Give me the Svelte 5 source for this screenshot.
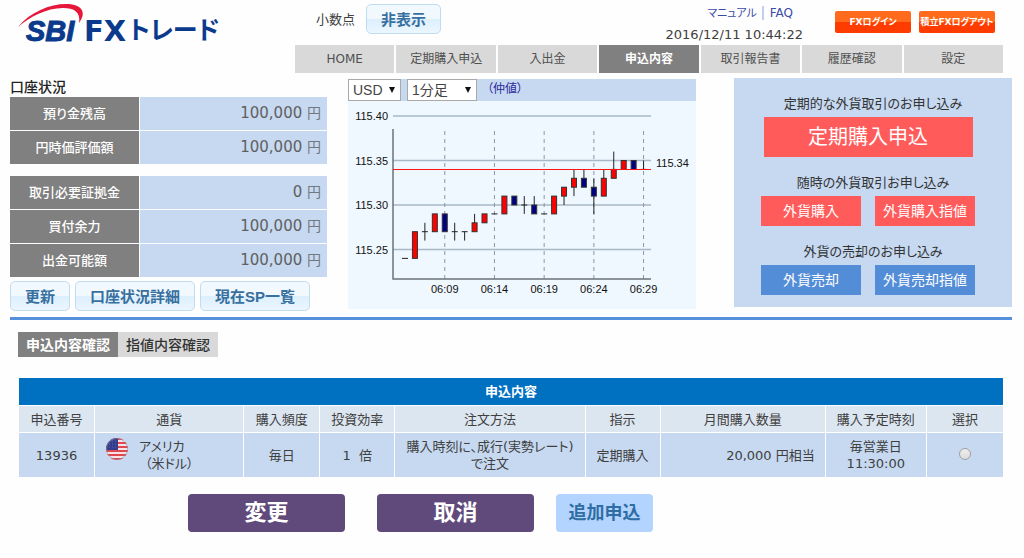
<script>
  let pair = $state('USD');
  let span = $state('1');
  let picked = $state('');

  const menu = ['HOME', '定期購入申込', '入出金', '申込内容', '取引報告書', '履歴確認', '設定'];
  const current = '申込内容';

  const balances = [
    [
      { label: '預り金残高', value: '100,000' },
      { label: '円時価評価額', value: '100,000' }
    ],
    [
      { label: '取引必要証拠金', value: '0' },
      { label: '買付余力', value: '100,000' },
      { label: '出金可能額', value: '100,000' }
    ]
  ];

  const orderGroups = [
    { caption: '定期的な外貨取引のお申し込み', kind: 'buy large', buttons: ['定期購入申込'] },
    { caption: '随時の外貨取引お申し込み', kind: 'buy', buttons: ['外貨購入', '外貨購入指値'] },
    { caption: '外貨の売却のお申し込み', kind: 'sell', buttons: ['外貨売却', '外貨売却指値'] }
  ];

  const columns = [
    { label: '申込番号', width: 76 },
    { label: '通貨', width: 149 },
    { label: '購入頻度', width: 76 },
    { label: '投資効率', width: 75 },
    { label: '注文方法', width: 190 },
    { label: '指示', width: 75 },
    { label: '月間購入数量', width: 165 },
    { label: '購入予定時刻', width: 101 },
    { label: '選択', width: 77 }
  ];

  // open, close, low, high (pips above 115.00)
  const candles = [
    [24, 24, 24, 24], [24, 27, 24, 27], [27, 27, 26, 28], [27, 29, 27, 29], [29, 27, 27, 29],
    [27, 27, 26, 28], [27, 27, 26, 27], [27, 28, 27, 29], [28, 29, 28, 29], [29, 29, 29, 29],
    [29, 31, 29, 31], [31, 30, 30, 31], [30, 30, 29, 31], [30, 29, 29, 31], [29, 29, 29, 29],
    [29, 31, 29, 31], [31, 32, 30, 32], [32, 33, 31, 34], [33, 32, 32, 34], [32, 31, 29, 33],
    [31, 33, 31, 34], [33, 34, 33, 36], [34, 35, 34, 35], [35, 34, 34, 35], [34, 34, 34, 35]
  ];
  const prices = [40, 35, 30, 25];
  const times = ['06:09', '06:14', '06:19', '06:24', '06:29'];

  const py = (p) => 104 - (p - 30) * 8.9;
  const px = (i) => 57 + i * 9.94;
</script>

<div class="page">
  <header>
    <svg class="logo" viewBox="0 0 285 54" role="img" aria-label="SBI FXトレード">
      <path d="M8 27C20 12 40 4 56 4C70 4 78 11 69 23C71 12 64 8 53 8C36 8 20 17 8 27Z" fill="#e6173a" />
      <text class="sbi" x="16" y="41">SBI</text>
      <text class="fx" x="74" y="41">FX</text>
      <text class="kana" x="119" y="39">トレード</text>
    </svg>
    <div class="decimals">
      <span>小数点</span>
      <button class="soft">非表示</button>
    </div>
    <div class="meta">
      <div class="links"><a href="#manual">マニュアル</a><a href="#faq">FAQ</a></div>
      <time>2016/12/11 10:44:22</time>
    </div>
    <div class="session">
      <button>FXログイン</button>
      <button>積立FXログアウト</button>
    </div>
  </header>

  <nav>
    {#each menu as item}
      <a href="#menu" class:active={item === current}>{item}</a>
    {/each}
  </nav>

  <div class="top">
    <section>
      <h2>口座状況</h2>
      {#each balances as group}
        <table class="balance">
          <tbody>
            {#each group as row}
              <tr>
                <th scope="row">{row.label}</th>
                <td>{row.value} <small>円</small></td>
              </tr>
            {/each}
          </tbody>
        </table>
      {/each}
      <div class="account-buttons">
        <button class="soft">更新</button>
        <button class="soft">口座状況詳細</button>
        <button class="soft">現在SP一覧</button>
      </div>
    </section>

    <section class="chart">
      <div class="chart-bar">
        <span class="select pair">
          <select bind:value={pair} aria-label="通貨">
            <option>USD</option>
          </select>
        </span>
        <span class="select span">
          <select bind:value={span} aria-label="足種">
            <option value="1">1分足</option>
          </select>
        </span>
        <span class="mid">（仲値）</span>
      </div>
      <svg viewBox="0 0 348 208">
        {#each prices as p}
          <line x1="45" x2="303" y1={py(p)} y2={py(p)} stroke="#a9b8c6" stroke-width="1.5" />
          <text x="40" y={py(p) + 4} text-anchor="end">115.{p}</text>
        {/each}
        {#each times as t, i}
          <line x1={px(4 + i * 5)} x2={px(4 + i * 5)} y1="30" y2="178" stroke="#8a97a8" stroke-dasharray="4 4" />
          <text x={px(4 + i * 5)} y="192" text-anchor="middle">{t}</text>
        {/each}
        <path d="M45 28V178H303" fill="none" stroke="#6c737c" stroke-width="1.5" />
        {#each candles as [open, close, low, high], i}
          <line x1={px(i)} x2={px(i)} y1={py(high)} y2={py(low)} stroke="#222" />
          {#if open === close}
            <line x1={px(i) - 3} x2={px(i) + 3} y1={py(open)} y2={py(open)} stroke="#222" />
          {:else}
            <rect
              x={px(i) - 2.5}
              y={py(Math.max(open, close))}
              width="5"
              height={Math.abs(open - close) * 8.9}
              fill={close > open ? '#f00' : '#000080'}
              stroke="#333" />
          {/if}
        {/each}
        <rect x="45" y="68" width="258" height="1" fill="#ff1414" />
        <text x="308" y="66">115.34</text>
      </svg>
    </section>

    <section class="orders">
      {#each orderGroups as group}
        <div class="order-group">
          <p>{group.caption}</p>
          <div class="order-buttons {group.kind}">
            {#each group.buttons as label}
              <button>{label}</button>
            {/each}
          </div>
        </div>
      {/each}
    </section>
  </div>

  <main>
    <div class="tabs">
      <button class="active">申込内容確認</button>
      <button>指値内容確認</button>
    </div>

    <table class="list">
      <colgroup>
        {#each columns as col}
          <col style="width: {col.width / 9.84}%" />
        {/each}
      </colgroup>
      <thead>
        <tr class="caption"><th colspan="9">申込内容</th></tr>
        <tr>
          {#each columns as col}
            <th scope="col">{col.label}</th>
          {/each}
        </tr>
      </thead>
      <tbody>
        <tr>
          <td>13936</td>
          <td>
            <div class="currency">
              <svg class="flag" viewBox="0 0 22 22">
                <clipPath id="round"><circle cx="11" cy="11" r="11" /></clipPath>
                <g clip-path="url(#round)">
                  <rect width="22" height="22" fill="#f4e4e8" />
                  {#each [0, 1, 2, 3, 4, 5] as n}
                    <rect y={n * 4} width="22" height="2" fill="#e0474f" />
                  {/each}
                  <rect width="12" height="12" fill="#343d8c" />
                  {#each [3, 6, 9] as y}
                    <path d="M3 {y}H11" stroke="#6068aa" stroke-dasharray="1 2" />
                  {/each}
                </g>
                <circle cx="11" cy="11" r="10.5" fill="none" stroke="#8f8fa8" stroke-opacity="0.6" />
              </svg>
              <div>アメリカ<br /><span>（米ドル）</span></div>
            </div>
          </td>
          <td>毎日</td>
          <td>1&nbsp; 倍</td>
          <td>購入時刻に、成行(実勢レート)<br />で注文</td>
          <td>定期購入</td>
          <td class="amount">20,000 円相当</td>
          <td>毎営業日<br />11:30:00</td>
          <td><input type="radio" name="order" value="13936" bind:group={picked} aria-label="13936を選択" /></td>
        </tr>
      </tbody>
    </table>

    <div class="actions">
      <button>変更</button>
      <button>取消</button>
      <button class="add">追加申込</button>
    </div>
  </main>
</div>

<style>
  :global(body) {
    margin: 0;
    background: #fefefe;
  }
  .page {
    padding: 0 12px 0 10px;
    font: 13px/17px 'DejaVu Sans', 'Noto Sans CJK JP', sans-serif;
    font-feature-settings: 'palt';
    color: #404040;
  }
  button {
    font-family: inherit;
    font-feature-settings: inherit;
    line-height: 1;
    padding: 0;
    border: 0;
    white-space: nowrap;
    cursor: pointer;
  }
  a {
    text-decoration: none;
  }
  table {
    width: 100%;
    border-spacing: 0;
  }

  header {
    display: flex;
    align-items: flex-start;
    height: 45px;
    padding-right: 17px;
  }
  .logo {
    width: 285px;
    height: 54px;
  }
  .logo text {
    fill: #0b3a8d;
    font-weight: bold;
  }
  .logo .sbi {
    font: italic bold 29px 'Liberation Sans', sans-serif;
    stroke: #0b3a8d;
    stroke-width: 1;
  }
  .logo .fx {
    font: bold 29px 'DejaVu Sans', sans-serif;
  }
  .logo .kana {
    font: bold 25px 'Noto Sans CJK JP', sans-serif;
    font-feature-settings: 'palt';
  }
  .decimals {
    display: flex;
    align-items: center;
    gap: 11px;
    margin: 4px 0 0 21px;
  }
  .soft {
    height: 30px;
    padding: 0 14px;
    border: 1px solid #c0dcf0;
    border-radius: 5px;
    background: linear-gradient(#f1f8fe 50%, #dceffd 50%, #ecf6fe);
    color: #38709f;
    font-family: 'Liberation Sans', 'Noto Sans CJK JP', sans-serif;
    font-size: 15px;
    font-weight: bold;
  }
  .meta {
    margin-left: auto;
    text-align: right;
  }
  .links {
    padding: 5px 10px 0 0;
    font-size: 12px;
  }
  .links a {
    color: #3b4ba8;
  }
  .links a:first-child {
    font-size: 11px;
  }
  .links a + a {
    margin-left: 5px;
    padding-left: 6px;
    border-left: 2px solid #c3cdee;
  }
  time {
    display: block;
    margin-top: 4px;
  }
  .session {
    display: flex;
    gap: 8px;
    margin: 11px 0 0 32px;
  }
  .session button {
    width: 76px;
    height: 22px;
    border-radius: 2px;
    background: linear-gradient(#ff6a1c 50%, #ff3c00 50%);
    color: #fff;
    font-size: 9px;
    font-weight: bold;
  }

  nav {
    display: flex;
    gap: 2px;
    margin: 0 9px 0 285px;
  }
  nav a {
    flex: 1 1 0;
    line-height: 28px;
    background: #d9d9d9;
    color: #505050;
    font-size: 12px;
    text-align: center;
    white-space: nowrap;
  }
  nav a.active {
    background: #808080;
    color: #fff;
    font-weight: bold;
  }

  .top {
    display: grid;
    grid-template-columns: 317fr 348fr 295fr;
    column-gap: 21px;
    align-items: start;
    padding: 5px 0 6px;
    border-bottom: 3px solid #568fdb;
  }
  h2 {
    margin: 0;
    color: #222;
    font-size: 14px;
    line-height: 18px;
    font-weight: 500;
  }
  .balance + .balance {
    margin-top: 11px;
  }
  .balance th,
  .balance td {
    height: 33px;
    padding: 0;
    border-top: 1px solid #fefefe;
  }
  .balance th {
    width: 41%;
    background: #808080;
    border-right: 1px solid #fefefe;
    color: #fff;
    font-weight: 500;
  }
  .balance td {
    padding-right: 6px;
    background: #c6d9f1;
    color: #606060;
    font-size: 15px;
    text-align: right;
  }
  .balance small {
    color: #707880;
    font-size: 14px;
  }
  .account-buttons {
    display: flex;
    gap: 5px;
    margin-top: 4px;
  }

  .chart {
    background: #eff7ff;
    margin-top: 1px;
  }
  .chart svg {
    display: block;
    width: 100%;
  }
  .chart text {
    font: 11px 'Liberation Sans', sans-serif;
    fill: #111;
  }
  .chart-bar {
    display: flex;
    gap: 6px;
    height: 22px;
    background: #c6d9f1;
  }
  .select {
    position: relative;
  }
  .select::after {
    content: '';
    position: absolute;
    right: 6px;
    top: 8px;
    border: solid transparent;
    border-width: 6px 3px 0;
    border-top-color: #111;
    pointer-events: none;
  }
  select {
    appearance: none;
    width: 100%;
    height: 22px;
    padding: 0 4px;
    border: 1px solid #a9a9a9;
    border-radius: 0;
    background: #fff;
    color: #444;
    font: 14px 'Liberation Sans', 'Noto Sans CJK JP', sans-serif;
  }
  .pair {
    width: 53px;
  }
  .span {
    width: 70px;
  }
  .mid {
    margin-left: 4px;
    line-height: 21px;
    color: #2c2c9c;
    font-size: 12px;
  }

  .orders {
    display: flex;
    flex-direction: column;
    gap: 17px;
    margin-left: 17px;
    padding: 17px 10px 12px;
    background: #c6d9f1;
    text-align: center;
  }
  .order-group p {
    margin: 0 0 4px;
    color: #333;
    line-height: 18px;
  }
  .order-buttons {
    display: flex;
    justify-content: center;
    gap: 14px;
    padding-right: 10px;
  }
  .order-buttons button {
    width: 100px;
    height: 30px;
    background: #ff5b5b;
    color: #fff;
    font-size: 14px;
  }
  .order-buttons.large button {
    width: 209px;
    height: 40px;
    font-size: 20px;
  }
  .order-buttons.sell button {
    background: #548dd7;
  }

  main {
    padding: 12px 9px 0 8px;
  }
  .tabs {
    display: flex;
  }
  .tabs button {
    width: 100px;
    height: 25px;
    background: #d9d9d9;
    color: #333;
    font-size: 14px;
    font-weight: 500;
  }
  .tabs .active {
    background: #808080;
    color: #fff;
    font-weight: bold;
  }
  .list {
    table-layout: fixed;
    margin-top: 21px;
    text-align: center;
  }
  .list th,
  .list td {
    padding: 0;
    border: solid #fefefe;
    border-width: 1px 0 0 1px;
  }
  .list th {
    height: 26px;
    background: #dce6f1;
    font-weight: normal;
  }
  .list .caption th {
    background: #0070c1;
    border-top: 0;
    height: 27px;
    color: #fff;
    font-weight: bold;
  }
  .list td {
    height: 44px;
    background: #c6d9f1;
  }
  .list .amount {
    padding-right: 10px;
    text-align: right;
  }
  .currency {
    display: flex;
    gap: 11px;
    padding-left: 11px;
    text-align: left;
  }
  .currency span {
    margin-left: 6px;
  }
  .flag {
    width: 22px;
    height: 22px;
  }
  input[type='radio'] {
    appearance: none;
    width: 12px;
    height: 12px;
    margin: 0;
    border: 1px solid #a0a0a0;
    border-radius: 50%;
    background: linear-gradient(#eee, #dcdcdc);
  }
  input[type='radio']:checked {
    background: radial-gradient(#444 35%, #eee 40%);
  }

  .actions {
    display: flex;
    gap: 32px;
    margin: 17px 0 0 170px;
  }
  .actions button {
    width: 157px;
    height: 38px;
    border-radius: 4px;
    background: #604a7b;
    color: #fff;
    font-size: 22px;
    font-weight: bold;
  }
  .actions .add {
    width: 97px;
    margin-left: -10px;
    background: #b3d4ff;
    color: #2f6da3;
    font-size: 18px;
  }
</style>
